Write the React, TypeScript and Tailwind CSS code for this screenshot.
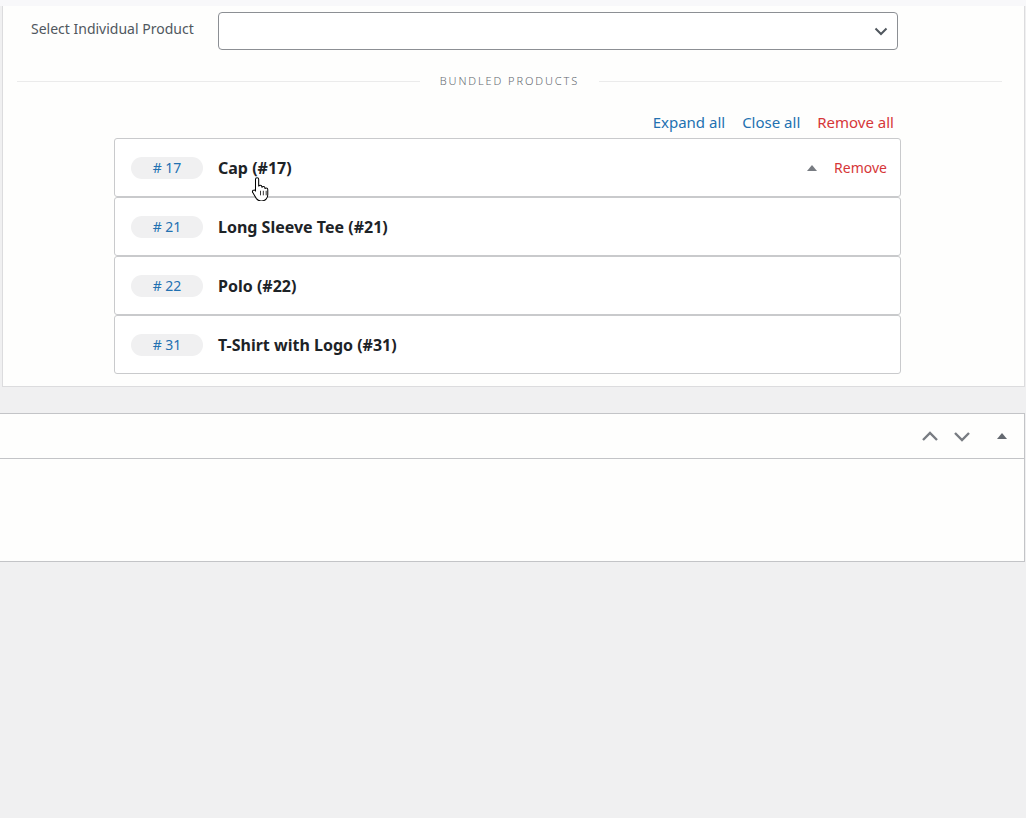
import React from 'react';

const items = [
  { id: 17, name: 'Cap', open: true },
  { id: 21, name: 'Long Sleeve Tee', open: false },
  { id: 22, name: 'Polo', open: false },
  { id: 31, name: 'T-Shirt with Logo', open: false },
];

function Caret({ className = '' }: { className?: string }) {
  return (
    <svg width="10" height="6" viewBox="0 0 10 6" className={className}>
      <path d="M5 0 L10 6 L0 6 Z" fill="currentColor" />
    </svg>
  );
}

function Chevron({ up }: { up?: boolean }) {
  return (
    <svg width="18" height="12" viewBox="0 0 18 12">
      <path
        d={up ? 'M2 10 L9 3 L16 10' : 'M2 3 L9 10 L16 3'}
        fill="none"
        stroke="currentColor"
        strokeWidth="2.4"
      />
    </svg>
  );
}

function HandCursor() {
  return (
    <svg width="19" height="25" viewBox="0 0 16 22" className="absolute left-[251px] top-[176px]">
      <path
        d="M5 1.5c.8 0 1.4.6 1.4 1.4v6.3c.2-.6.8-1 1.4-1 .8 0 1.4.6 1.4 1.4v.5c.2-.5.7-.9 1.3-.9.8 0 1.4.6 1.4 1.4v.6c.2-.4.6-.7 1.1-.7.8 0 1.4.6 1.4 1.4v4.6c0 3-2.2 5.4-5.2 5.4H8.3c-1.6 0-3-.8-3.9-2L1.2 14.6c-.5-.7-.3-1.6.4-2 .6-.4 1.4-.3 1.9.3l.1.1V2.9c0-.8.6-1.4 1.4-1.4z"
        fill="#fff"
        stroke="#000"
        strokeWidth="0.9"
      />
      <path d="M8 13v4M10.5 13v4M13 13v4" stroke="#000" strokeWidth="0.7" />
    </svg>
  );
}

export default function App() {
  return (
    <div
      className="relative min-h-[818px] bg-[#f0f0f1] text-[#3c434a]"
      style={{ fontFamily: '"Noto Sans", "Open Sans", sans-serif' }}
    >
      <div className="h-[6px] bg-[#f8f8fa]" />

      {/* bundle settings panel */}
      <div className="ml-[2px] mr-[1px] border-l border-r border-b border-[#dcdcde] bg-[#fefefd] pb-[12px]">
        <div className="flex items-center pt-[6px]">
          <label className="w-[215px] pb-[6px] pl-[28px] text-[14px] text-[#50575e]">Select Individual Product</label>
          <div className="flex h-[38px] w-[680px] items-center justify-end rounded-[4px] border border-[#8c8f94] bg-white pr-[9px] text-[#50575e]">
            <svg width="14" height="9" viewBox="0 0 14 9">
              <path d="M1.5 1.5 L7 7 L12.5 1.5" fill="none" stroke="currentColor" strokeWidth="2" />
            </svg>
          </div>
        </div>

        <div className="ml-[14px] mr-[22px] mt-[24px] flex h-[14px] items-center gap-5">
          <div className="h-px flex-1 bg-[#ebebeb]" />
          <span className="text-[11px] leading-[14px] font-light tracking-[1.9px] text-[#646970]">BUNDLED PRODUCTS</span>
          <div className="h-px flex-1 bg-[#ebebeb]" />
        </div>

        <div className="ml-[111px] w-[787px]">
          <div className="flex h-[50px] items-end justify-end gap-[17px] pr-[7px] pb-[5px] text-[15px] leading-[22px]">
            <a className="text-[#2271b1]">Expand all</a>
            <a className="text-[#2271b1]">Close all</a>
            <a className="text-[#d63638]">Remove all</a>
          </div>

          {items.map((it) => (
            <div
              key={it.id}
              className="flex h-[59px] items-center rounded-[3px] border border-[#c9cacc] bg-white pl-4 pr-[13px]"
            >
              <span className="flex h-[22px] w-[72px] items-center justify-center rounded-full bg-[#f0f0f1] text-[14px] text-[#2271b1]">
                # {it.id}
              </span>
              <span className="ml-[15px] text-[16px] font-bold text-[#1d2327]">
                {it.name} (#{it.id})
              </span>
              {it.open && (
                <div className="ml-auto flex items-center gap-[17px]">
                  <Caret className="text-[#787c82]" />
                  <a className="text-[14px] text-[#d63638]">Remove</a>
                </div>
              )}
            </div>
          ))}
        </div>
      </div>

      {/* next postbox */}
      <div className="mt-[26px] mr-[1px] border-t border-r border-b border-[#c3c4c7] bg-[#fefefd]">
        <div className="flex h-[45px] items-center justify-end gap-[14px] border-b border-[#c3c4c7] pr-[17px] text-[#787c82]">
          <Chevron up />
          <Chevron />
          <Caret className="ml-[12px] text-[#646970]" />
        </div>
        <div className="h-[102px]" />
      </div>

      <HandCursor />
    </div>
  );
}
